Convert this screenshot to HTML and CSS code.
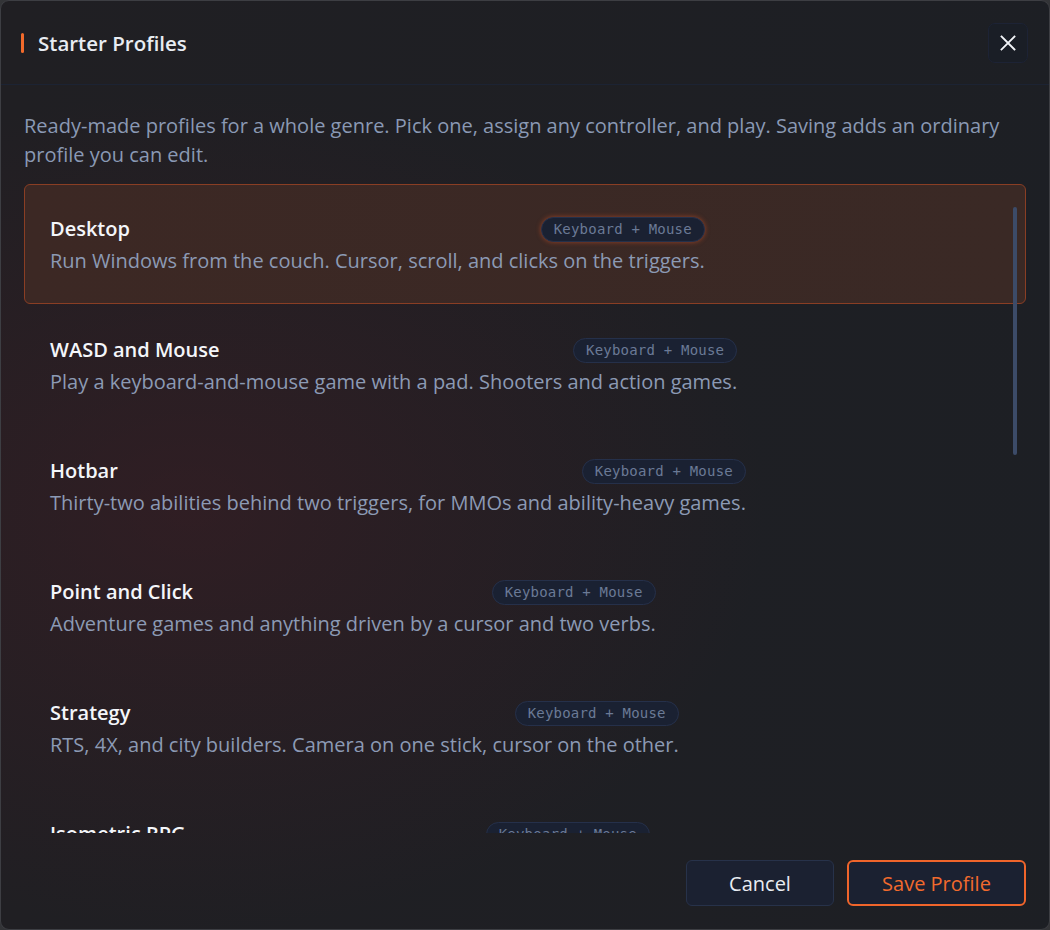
FILE: index.html
```html
<!DOCTYPE html>
<html lang="en">
<head>
<meta charset="utf-8">
<title>Starter Profiles</title>
<link rel="stylesheet" href="styles.css">
</head>
<body>
<div class="dialog" role="dialog" aria-labelledby="dlg-title">
  <header class="dialog-header">
    <h2 class="dialog-title" id="dlg-title"><span class="accent"></span>Starter Profiles</h2>
    <button class="close-btn" aria-label="Close">
      <svg width="18" height="18" viewBox="0 0 18 18" fill="none" stroke="currentColor" stroke-width="1.8" stroke-linecap="square">
        <path d="M2.5 2.5 L15.5 15.5 M15.5 2.5 L2.5 15.5"/>
      </svg>
    </button>
  </header>

  <div class="dialog-body">
    <p class="intro">Ready-made profiles for a whole genre. Pick one, assign any controller, and play. Saving adds an ordinary profile you can edit.</p>

    <div class="list-wrap">
      <ul class="profile-list">
        <li class="profile selected">
          <div class="profile-inner">
            <div class="profile-head"><span class="profile-name">Desktop</span><span class="tag">Keyboard + Mouse</span></div>
            <div class="profile-desc">Run Windows from the couch. Cursor, scroll, and clicks on the triggers.</div>
          </div>
        </li>
        <li class="profile">
          <div class="profile-inner">
            <div class="profile-head"><span class="profile-name">WASD and Mouse</span><span class="tag">Keyboard + Mouse</span></div>
            <div class="profile-desc">Play a keyboard-and-mouse game with a pad. Shooters and action games.</div>
          </div>
        </li>
        <li class="profile">
          <div class="profile-inner">
            <div class="profile-head"><span class="profile-name">Hotbar</span><span class="tag">Keyboard + Mouse</span></div>
            <div class="profile-desc">Thirty-two abilities behind two triggers, for MMOs and ability-heavy games.</div>
          </div>
        </li>
        <li class="profile">
          <div class="profile-inner">
            <div class="profile-head"><span class="profile-name">Point and Click</span><span class="tag">Keyboard + Mouse</span></div>
            <div class="profile-desc">Adventure games and anything driven by a cursor and two verbs.</div>
          </div>
        </li>
        <li class="profile">
          <div class="profile-inner">
            <div class="profile-head"><span class="profile-name">Strategy</span><span class="tag">Keyboard + Mouse</span></div>
            <div class="profile-desc">RTS, 4X, and city builders. Camera on one stick, cursor on the other.</div>
          </div>
        </li>
        <li class="profile">
          <div class="profile-inner">
            <div class="profile-head"><span class="profile-name">Isometric RPG</span><span class="tag">Keyboard + Mouse</span></div>
            <div class="profile-desc">Click to move, skills on the face buttons, and flasks on the d-pad.</div>
          </div>
        </li>
      </ul>
      <div class="scrollbar"></div>
    </div>
  </div>

  <footer class="dialog-footer">
    <button class="btn btn-secondary">Cancel</button>
    <button class="btn btn-primary">Save Profile</button>
  </footer>
</div>
</body>
</html>
```

FILE: styles.css
```css
* { box-sizing: border-box; }

html, body {
  margin: 0;
  height: 100%;
  background: #333437;
}

body {
  font-family: "Open Sans", "Noto Sans", "Liberation Sans", sans-serif;
  color: #e9edf4;
}

.dialog {
  height: 930px;
  display: flex;
  flex-direction: column;
  border: 1px solid #3d3e43;
  border-radius: 9px;
  overflow: hidden;
  background:
    radial-gradient(ellipse 55% 45% at 18% 55%, rgba(72, 28, 36, 0.4), rgba(72, 28, 36, 0) 100%),
    linear-gradient(90deg, rgba(30, 31, 35, 0) 0%, rgba(27, 31, 37, 0.6) 100%),
    #201f23;
}

/* header */
.dialog-header {
  height: 84px;
  flex: none;
  display: flex;
  align-items: center;
  justify-content: space-between;
  padding: 0 21px 0 20px;
  border-bottom: 1px solid #1c2333;
}

.dialog-title {
  margin: 0;
  display: flex;
  align-items: center;
  gap: 14px;
  font-size: 20.5px;
  font-weight: 600;
  color: #e8ecf2;
}

.accent {
  width: 3px;
  height: 20px;
  border-radius: 2px;
  background: #f26a2b;
}

.close-btn {
  width: 40px;
  height: 40px;
  display: flex;
  align-items: center;
  justify-content: center;
  padding: 0;
  border: 1px solid #1d2335;
  border-radius: 7px;
  background: #1a1e26;
  color: #f2f4f8;
}

/* body */
.dialog-body {
  flex: 1;
  min-height: 0;
  display: flex;
  flex-direction: column;
  padding: 26px 23px 0 23px;
}

.intro {
  margin: 0 0 15px;
  font-size: 20px;
  line-height: 29px;
  color: #8a99b4;
}

.list-wrap {
  position: relative;
  flex: 1;
  min-height: 0;
  overflow: hidden;
}

.profile-list {
  list-style: none;
  margin: 0;
  padding: 0;
  display: flex;
  flex-direction: column;
  gap: 1px;
}

.profile {
  height: 120px;
  flex: none;
  padding: 30px 25px 28px;
  border: 1px solid transparent;
  border-radius: 6px;
}

.profile.selected {
  border-color: #8a3e24;
  background: linear-gradient(90deg, #3c2824 0%, #3a2925 100%);
}

.profile-inner {
  width: max-content;
  display: flex;
  flex-direction: column;
  gap: 4px;
}

.profile-head {
  display: flex;
  align-items: center;
  justify-content: space-between;
  height: 28px;
}

.profile-name {
  font-size: 20px;
  font-weight: 600;
  line-height: 28px;
  color: #f4f6fa;
}

.profile-desc {
  font-size: 20px;
  line-height: 28px;
  color: #8c9ab4;
}

.tag {
  height: 25px;
  display: inline-flex;
  align-items: center;
  padding: 0 12px;
  border: 1px solid #25304a;
  border-radius: 999px;
  background: #1a2132;
  font-family: "DejaVu Sans Mono", "Liberation Mono", monospace;
  font-size: 14px;
  letter-spacing: 0.2px;
  color: #6b7a96;
}

.profile.selected .tag {
  box-shadow: 0 0 5px rgba(226, 88, 40, 0.55);
}

.scrollbar {
  position: absolute;
  top: 23px;
  right: 9px;
  width: 4px;
  height: 248px;
  border-radius: 2px;
  background: #3c4b68;
}

/* footer */
.dialog-footer {
  flex: none;
  display: flex;
  justify-content: flex-end;
  gap: 13px;
  padding: 27px 23px 23px;
}

.btn {
  height: 46px;
  padding: 0;
  border-radius: 6px;
  background: #1b2131;
  font-family: inherit;
  font-size: 20px;
}

.btn-secondary {
  width: 148px;
  border: 1px solid #27324a;
  color: #e9ecf2;
}

.btn-primary {
  width: 179px;
  border: 2px solid #f0652b;
  color: #f26a2d;
}
```
